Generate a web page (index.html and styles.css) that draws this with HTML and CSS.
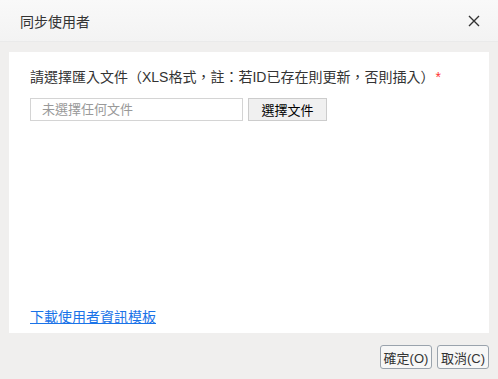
FILE: index.html
```html
<!DOCTYPE html>
<html>

<head>
    <meta charset="utf-8">
    <title>同步使用者</title>
    <link rel="stylesheet" href="styles.css">
</head>

<body>
    <div class="dialog">
        <div class="header">
            <label class="title">同步使用者</label>
            <span class="close">
                <svg width="12" height="12" viewBox="0 0 12 12">
                    <path d="M1 1L11 11M11 1L1 11" stroke="#333" stroke-width="1.4" fill="none" />
                </svg>
            </span>
        </div>
        <div class="content">
            <div class="panel">
                <div class="tip">請選擇匯入文件（XLS格式，註：若ID已存在則更新，否則插入）<span class="req">*</span></div>
                <div class="file-row">
                    <div class="file-name">未選擇任何文件</div>
                    <input type="button" value="選擇文件" class="file-btn">
                </div>
                <div class="grow"></div>
                <a href="#" class="download">下載使用者資訊模板</a>
            </div>
            <div class="footer">
                <input type="button" value="確定(O)" class="btn">
                <input type="button" value="取消(C)" class="btn">
            </div>
        </div>
    </div>
</body>

</html>
```

FILE: styles.css
```css
html,
body {
    margin: 0;
    width: 100%;
    height: 100%;
    font-family: "Liberation Sans", "Noto Sans CJK TC", sans-serif;
    font-size: 14px;
}

.dialog {
    width: 498px;
    height: 379px;
    display: flex;
    flex-direction: column;
    background-color: #f0efee;
}

.header {
    height: 42px;
    display: flex;
    align-items: center;
    justify-content: space-between;
    padding: 0 18px 0 20px;
    background: linear-gradient(#f9f9f9, #f3f3f3);
    border-bottom: solid 1px #eaeaea;
    box-sizing: border-box;
}

.title {
    color: #333;
    font-size: 14px;
}

.close {
    display: flex;
}

.content {
    flex: 1;
    display: flex;
    flex-direction: column;
    padding: 10px 9px 8px 9px;
}

.panel {
    height: 281px;
    background-color: #fff;
    display: flex;
    flex-direction: column;
    padding: 15px 21px 6px 21px;
    box-sizing: border-box;
}

.tip {
    color: #333;
    line-height: 20px;
}

.req {
    color: #f33;
    margin-left: 1px;
}

.file-row {
    display: flex;
    margin-top: 11px;
}

.file-name {
    width: 213px;
    height: 23px;
    box-sizing: border-box;
    border: solid 1px #d4d4d4;
    color: #999;
    font-size: 13px;
    line-height: 21px;
    padding-left: 11px;
}

.file-btn {
    width: 79px;
    height: 23px;
    margin-left: 5px;
    border: solid 1px #ccc;
    background-color: #f0f0f0;
    font-family: inherit;
    font-size: 13px;
    color: #000;
    padding: 0;
}

.grow {
    flex: 1;
}

.download {
    color: #1a73e8;
    line-height: 20px;
}

.footer {
    display: flex;
    justify-content: flex-end;
    gap: 5px;
    margin-top: 12px;
}

.btn {
    width: 52px;
    height: 24px;
    padding: 0;
    border: solid 1px #9aa3ad;
    border-radius: 3px;
    background-color: #f7f7f7;
    font-family: inherit;
    font-size: 13px;
    color: #333;
}
```
